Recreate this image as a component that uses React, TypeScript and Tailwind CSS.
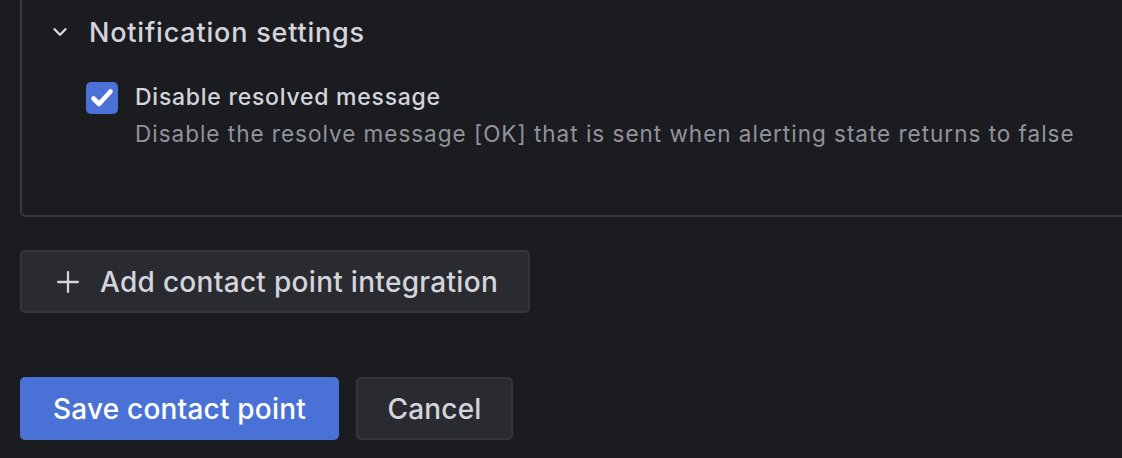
import { ChevronDown, Plus } from "lucide-react";

export default function App() {
  return (
    <div className="h-[458px] w-[1122px] overflow-hidden bg-[#1b1c20] pl-5 font-['Inter',sans-serif] text-[#d3d4dc]">
      <div className="-mr-8 h-[217px] rounded-bl-md border-b-2 border-l-2 border-[#393a40]">
        <div className="flex h-[64px] items-center pl-[27px]">
          <ChevronDown className="h-[22px] w-[22px] text-[#d3d4dc]" strokeWidth={2.6} aria-hidden="true" />
          <h2 className="ml-[18px] text-[27px] font-medium leading-none tracking-[0.8px]">Notification settings</h2>
        </div>
        <div className="mt-[16px] flex gap-[17px] pl-[64px]">
          <span className="mt-[2px] flex h-[32px] w-[32px] shrink-0 items-center justify-center rounded-[5px] bg-[#4a72d6]">
            <svg viewBox="0 0 32 32" className="h-[32px] w-[32px]" aria-hidden="true">
              <path d="M7.5 16.5 L13 22 L24.5 9.5" fill="none" stroke="white" strokeWidth="4.6" strokeLinecap="round" strokeLinejoin="round" />
            </svg>
          </span>
          <div>
            <p className="text-[23px] font-medium leading-[34px] tracking-[0.75px]">Disable resolved message</p>
            <p className="mt-[3px] text-[22.5px] leading-[34px] tracking-[0.99px] text-[#92939c]">Disable the resolve message [OK] that is sent when alerting state returns to false</p>
          </div>
        </div>
      </div>

      <button type="button" className="mt-[33px] flex h-[63px] w-[510px] items-center gap-[15px] rounded-[5px] border-2 border-[#35363c] bg-[#2a2b30] pl-[29px] text-[28px] font-medium tracking-[0.3px] text-[#d3d4dc]">
        <Plus className="h-[34px] w-[34px]" strokeWidth={1.6} aria-hidden="true" />
        Add contact point integration
      </button>

      <div className="mt-[64px] flex gap-[17px]">
        <button type="button" className="h-[63px] w-[319px] rounded-[5px] bg-[#4a72d6] text-[28px] font-medium tracking-[0.2px] text-white">Save contact point</button>
        <button type="button" className="h-[63px] w-[157px] rounded-[5px] border-2 border-[#35363c] bg-[#2a2b30] text-[28px] font-medium tracking-[0.2px] text-[#d3d4dc]">Cancel</button>
      </div>
    </div>
  );
}
